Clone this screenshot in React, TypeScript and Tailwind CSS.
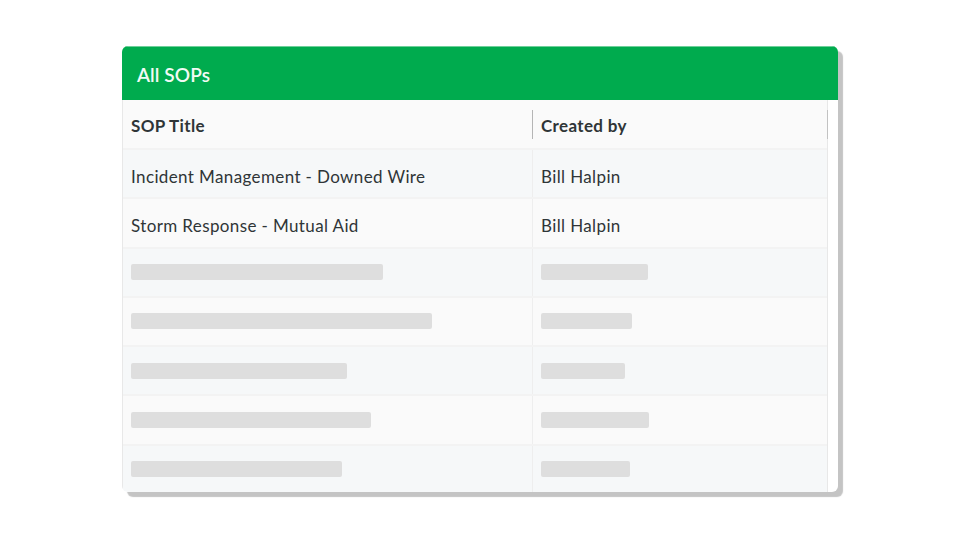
const rows = [
  { title: 'Incident Management - Downed Wire', author: 'Bill Halpin' },
  { title: 'Storm Response - Mutual Aid', author: 'Bill Halpin' },
  { titleW: 'w-[252px]', authorW: 'w-[107px]' },
  { titleW: 'w-[301px]', authorW: 'w-[91px]' },
  { titleW: 'w-[216px]', authorW: 'w-[84px]' },
  { titleW: 'w-[240px]', authorW: 'w-[108px]' },
  { titleW: 'w-[211px]', authorW: 'w-[89px]' },
];

function Row({ row, index }: { row: (typeof rows)[number]; index: number }) {
  const tint = index % 2 === 0 ? 'bg-[#f6f8f9]' : 'bg-[#fafafa]';
  return (
    <div className={`grid h-[49.25px] grid-cols-[410px_1fr] border-b-2 border-[#f3f3f3] ${tint}`}>
      <div className="flex items-center border-r border-[#eeeeee] pl-[8px]">
        {row.title ? (
          <span className="pt-[6px] text-[17px] tracking-[0.38px] text-[#2f3537]">{row.title}</span>
        ) : (
          <div className={`h-[16px] rounded-[2px] bg-[#dedede] ${row.titleW}`} />
        )}
      </div>
      <div className="flex items-center pl-[8px]">
        {row.author ? (
          <span className="pt-[6px] text-[17px] tracking-[0.38px] text-[#2f3537]">{row.author}</span>
        ) : (
          <div className={`h-[16px] rounded-[2px] bg-[#dedede] ${row.authorW}`} />
        )}
      </div>
    </div>
  );
}

export default function App() {
  return (
    <div className="flex h-[540px] w-[960px] justify-center bg-white pt-[46px] font-['Lato',sans-serif]">
      <div className="h-[446px] w-[716px] overflow-hidden rounded-[6px] bg-white shadow-[5px_5px_1px_#c4c4c4]">
        <div className="flex h-[54px] items-center border-t border-[#6fcf9a] bg-[#00ab4e] pt-[4px] pl-[15px] text-[19px] font-semibold tracking-[0.1px] text-[#f2fbf5]">
          All SOPs
        </div>
        <div className="mr-[10px] border-r border-l border-[#e8e8e8]">
          <div className="grid h-[50px] grid-cols-[410px_1fr] border-b-2 border-[#f3f3f3] bg-[#fafafa] text-[17px] font-bold tracking-[0.35px] text-[#2f3537]">
            <div className="relative flex items-center pt-[3px] pl-[8px]">
              SOP Title
              <div className="absolute top-[10px] right-0 h-[29px] w-[1px] bg-[#b5b5b5]" />
            </div>
            <div className="relative flex items-center pt-[3px] pl-[8px]">
              Created by
              <div className="absolute top-[10px] right-[-1px] h-[29px] w-[1px] bg-[#c2c2c2]" />
            </div>
          </div>
          {rows.map((row, index) => (
            <Row key={index} row={row} index={index} />
          ))}
        </div>
      </div>
    </div>
  );
}
